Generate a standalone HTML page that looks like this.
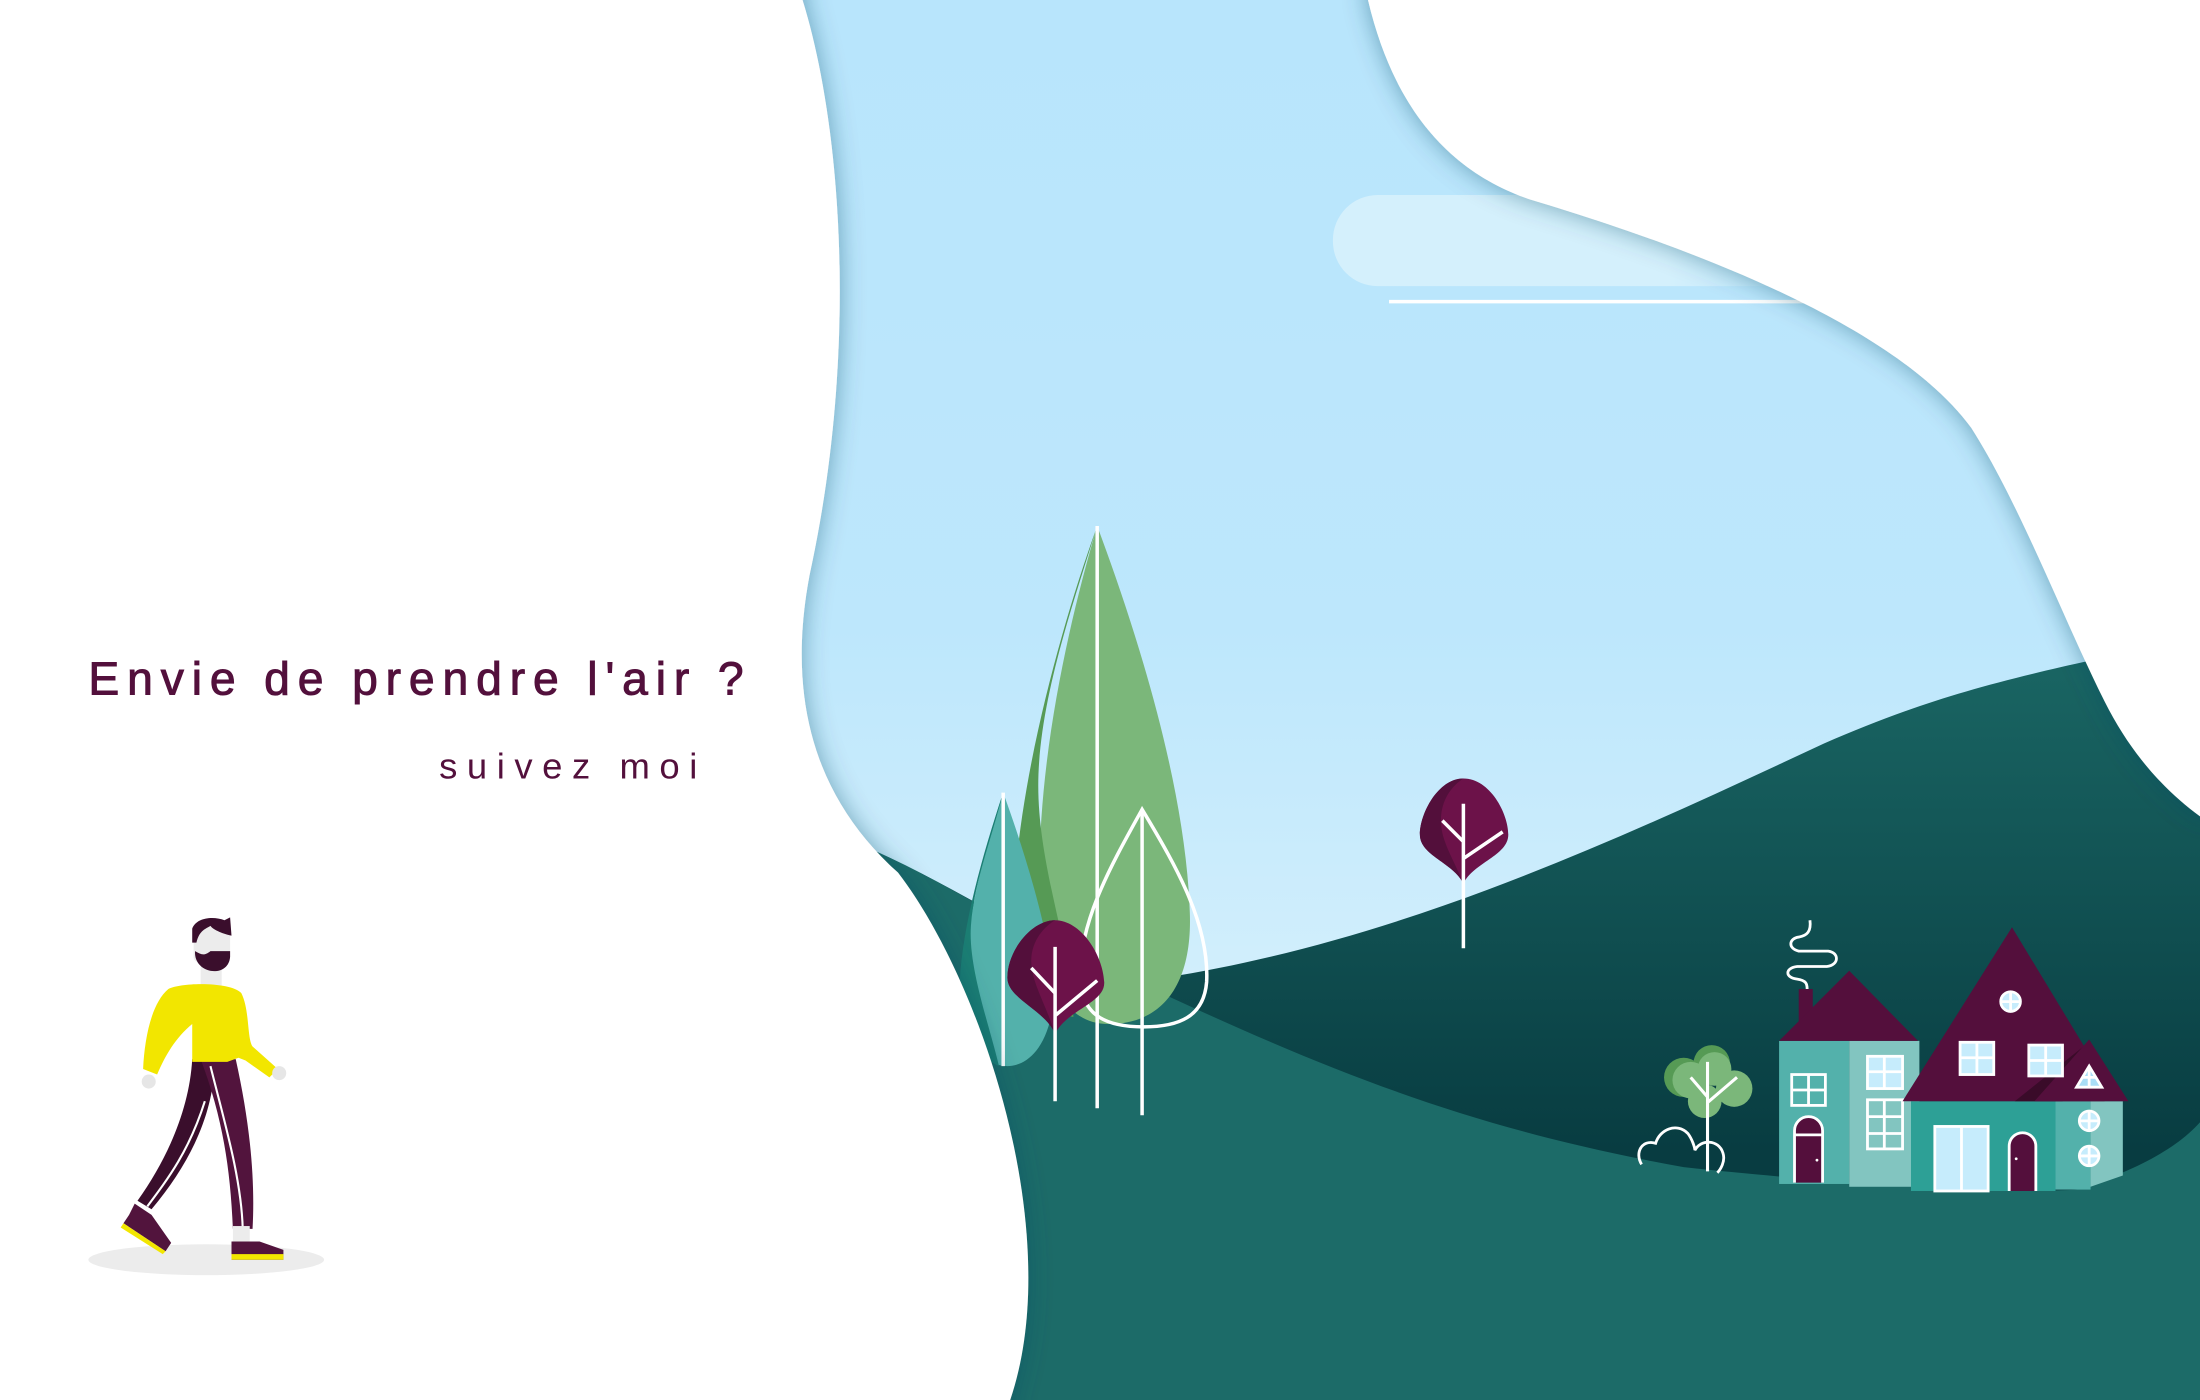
<!DOCTYPE html>
<html><head><meta charset="utf-8"><style>
html,body{margin:0;padding:0;width:2200px;height:1400px;overflow:hidden;background:#fff}
svg{display:block}
</style></head><body>
<svg width="2200" height="1400" viewBox="0 0 1568 998" preserveAspectRatio="none" xmlns="http://www.w3.org/2000/svg">
<defs>
<linearGradient id="sky" x1="0" y1="0" x2="0" y2="1"><stop offset="0" stop-color="#b8e5fc"/><stop offset="0.45" stop-color="#bde7fc"/><stop offset="0.72" stop-color="#d3effc"/></linearGradient>
<linearGradient id="back" gradientUnits="userSpaceOnUse" x1="0" y1="480" x2="0" y2="820"><stop offset="0" stop-color="#196462"/><stop offset="1" stop-color="#083c41"/></linearGradient>
<linearGradient id="cloud" x1="0" y1="0" x2="1" y2="0"><stop offset="0" stop-color="#d4f0fc"/><stop offset="0.7" stop-color="#d4f0fc"/><stop offset="1" stop-color="#d4f0fc" stop-opacity="0"/></linearGradient>
<filter id="sh" x="-20%" y="-20%" width="140%" height="140%"><feDropShadow dx="0" dy="0" stdDeviation="9" flood-color="#1c4a66" flood-opacity="0.45"/></filter>
</defs>
<rect width="1568" height="998" fill="url(#sky)"/>
<rect x="950" y="139" width="340" height="65" rx="32" fill="url(#cloud)"/>
<line x1="990" y1="215" x2="1290" y2="215" stroke="#fff" stroke-width="2.5"/>
<path d="M620,605 C700,640 760,690 830,697 C1000,670 1150,600 1300,530 C1380,495 1440,480 1568,455 L1568,998 L620,998Z" fill="url(#back)"/>
<path d="M620,605 C700,640 760,690 815,702 C950,765 1050,805 1200,832 C1350,848 1450,850 1480,848 C1520,835 1550,820 1568,800 L1568,998 L620,998 Z" fill="#1c6b68"/>
<path d="M782,375 C810,450 845,560 848,650 C850,700 830,730 790,730 C760,730 745,700 742,660 C735,560 760,450 782,375Z" fill="#7bb77a"/>
<path d="M782,375 C755,450 725,560 722,650 C722,690 740,720 765,725 C765,680 740,620 740,560 C740,500 765,430 782,375Z" fill="#569a55"/>
<line x1="782" y1="375" x2="782" y2="790" stroke="#fff" stroke-width="2.5"/>
<path d="M715,565 C735,620 755,690 750,720 C745,750 730,760 718,760 C700,760 690,740 688,700 C688,660 700,610 715,565Z" fill="#53b1ab"/>
<path d="M715,565 C700,610 686,660 684,700 C684,735 700,755 712,760 C705,730 690,690 692,660 C694,630 706,600 715,565Z" fill="#1b7e73"/>
<line x1="715" y1="565" x2="715" y2="760" stroke="#fff" stroke-width="2.5"/>
<path d="M814,577 C840,620 862,660 860,700 C858,725 840,732 815,732 C790,732 772,725 770,700 C768,660 790,620 814,577Z" fill="none" stroke="#fff" stroke-width="2.5"/>
<line x1="814" y1="577" x2="814" y2="795" stroke="#fff" stroke-width="2.5"/>
<path d="M752,656 C770,656 786,680 787,700 C788,715 760,720 752,737 C745,720 718,712 718,697 C718,678 735,656 752,656Z" fill="#6c1249"/>
<path d="M752,656 C735,656 718,678 718,697 C718,712 745,720 752,737 C745,715 735,700 735,685 C735,670 745,660 752,656Z" fill="#530f3b"/>
<path d="M752,675 L752,785 M752,724 L782,699 M752,708 L735,690" stroke="#fff" stroke-width="2.5" fill="none"/>
<path d="M1043,555 C1062,555 1075,580 1075,595 C1075,610 1050,615 1043,630 C1036,615 1012,610 1012,595 C1012,580 1025,555 1043,555Z" fill="#6c1249"/>
<path d="M1043,555 C1025,555 1012,580 1012,595 C1012,610 1036,615 1043,630 C1036,612 1027,600 1027,585 C1027,570 1035,560 1043,555Z" fill="#530f3b"/>
<path d="M1043,573 L1043,676 M1043,612 L1071,593 M1043,600 L1028,585" stroke="#fff" stroke-width="2.5" fill="none"/>
<circle cx="1200" cy="768" r="14" fill="#569a55"/><circle cx="1220" cy="758" r="13" fill="#569a55"/>
<circle cx="1205" cy="770" r="13" fill="#7bb77a"/><circle cx="1222" cy="762" r="12" fill="#7bb77a"/><circle cx="1236" cy="776" r="13" fill="#7bb77a"/><circle cx="1215" cy="785" r="12" fill="#7bb77a"/>
<path d="M1217,757 L1217,835 M1217,786 L1238,768 M1217,782 L1205,768" stroke="#fff" stroke-width="2.2" fill="none"/>
<path d="M1170,830 C1165,822 1170,812 1180,815 C1183,805 1195,800 1203,808 C1206,812 1208,818 1208,820 C1212,812 1225,812 1228,822 C1230,828 1226,834 1224,836" fill="none" stroke="#fff" stroke-width="2"/>
<rect x="1268" y="742" width="50" height="102" fill="#53b1ab"/>
<rect x="1318" y="742" width="50" height="104" fill="#82c5c0"/>
<rect x="1282" y="705" width="10" height="28" fill="#540f3c"/>
<polygon points="1268,742 1318,692 1367,742" fill="#540f3c"/>
<path d="M1290,656 C1291,664 1288,667 1282,668 C1275,669 1274,676 1282,678 L1303,678 C1311,679 1311,688 1302,689 L1281,689 C1272,690 1272,697 1281,698 C1287,699 1288,701 1288,705" fill="none" stroke="#fff" stroke-width="2"/>
<g stroke="#fff" stroke-width="2">
<rect x="1277" y="766" width="24" height="22" fill="none"/><path d="M1289,766V788M1277,777H1301"/>
<rect x="1331" y="753" width="25" height="23" fill="#c6ecfc"/><path d="M1343,753V776M1331,764H1356"/>
<rect x="1331" y="784" width="25" height="35" fill="none"/><path d="M1343,784V819M1331,796H1356M1331,808H1356"/>
<path d="M1279,843 V806 A10,10 0 0 1 1299,806 V843" fill="#540f3c"/><path d="M1279,809H1299"/>
</g>
<circle cx="1295" cy="827" r="1" fill="#fff"/>
<rect x="1362" y="785" width="103" height="64" fill="#2da096"/>
<rect x="1465" y="785" width="25" height="63" fill="#53b1ab"/>
<path d="M1490,785 H1513 V838 L1490,846Z" fill="#82c5c0"/>
<polygon points="1356,785 1434,661 1500,770 1500,785" fill="#540f3c"/>
<polygon points="1436,785 1490,742 1470,785" fill="#3a0b29"/>
<polygon points="1450,785 1489,741 1517,785" fill="#540f3c"/>
<g stroke="#fff" stroke-width="2">
<circle cx="1433" cy="714" r="7" fill="#c6ecfc"/><path d="M1433,707V721M1426,714H1440"/>
<rect x="1397" y="743" width="24" height="23" fill="#c6ecfc"/><path d="M1409,743V766M1397,754H1421"/>
<rect x="1446" y="745" width="24" height="22" fill="#c6ecfc"/><path d="M1458,745V767M1446,756H1470"/>
<polygon points="1489,760 1480,775 1498,775" fill="#a9def7"/><path d="M1489,760V775M1484,768H1494"/>
<circle cx="1489" cy="799" r="7" fill="#c6ecfc"/><path d="M1489,792V806M1482,799H1496"/>
<circle cx="1489" cy="824" r="7" fill="#c6ecfc"/><path d="M1489,817V831M1482,824H1496"/>
<rect x="1379" y="803" width="38" height="46" fill="#c6ecfc"/><path d="M1398,803V849"/>
<path d="M1432,849 V817 A9.5,9.5 0 0 1 1451,817 V849" fill="#540f3c"/>
</g>
<circle cx="1437" cy="826" r="1" fill="#fff"/>
<g filter="url(#sh)" fill="#fff">
<path d="M-20,-20 L572,-20 L572,0 C600,90 612,250 577,410 C560,500 582,570 640,622 C700,700 760,880 720,998 L720,1020 L-20,1020 Z"/>
<path d="M975,-20 L975,0 C995,85 1040,125 1090,142 C1200,175 1350,230 1405,305 C1440,360 1470,440 1500,500 C1520,540 1545,565 1568,582 L1590,582 L1590,-20 Z"/>
</g>
<text x="63" y="495" font-family="Liberation Sans, sans-serif" font-size="33" fill="#53103c" stroke="#53103c" stroke-width="0.7" textLength="467" lengthAdjust="spacing">Envie de prendre l'air ?</text>
<text x="313" y="555" font-family="Liberation Sans, sans-serif" font-size="26" fill="#53103c" textLength="184" lengthAdjust="spacing">suivez moi</text>
<ellipse cx="147" cy="898" rx="84" ry="11" fill="#ececec"/>
<path d="M137,755 L153,758 C152,795 135,830 108,862 L98,856 C120,825 135,790 137,755Z" fill="#3a0e2c"/>
<path d="M143,755 L168,755 C178,800 182,840 180,876 L166,876 C164,830 158,795 143,755Z" fill="#52143d"/>
<path d="M150,760 C160,800 172,840 173,876" stroke="#fff" stroke-width="1.5" fill="none"/>
<path d="M146,785 C135,820 120,840 105,860" stroke="#fff" stroke-width="1.5" fill="none"/>
<rect x="166" y="874" width="12" height="12" fill="#ececec"/>
<path d="M165,885 L185,885 L202,891 L202,898 L165,898Z" fill="#52143d"/><rect x="165" y="894" width="37" height="4" fill="#f2e600"/>
<path d="M96,858 L108,866 L122,886 L118,892 L88,872 L92,866Z" fill="#52143d"/><path d="M88,872 L118,892 L116,894 L86,875Z" fill="#f2e600"/>
<rect x="143" y="688" width="15" height="15" fill="#ececec"/>
<path d="M120,705 C130,700 165,700 172,708 C178,720 176,740 180,746 L198,762 L192,768 L175,756 L170,754 L162,757 L137,757 L137,730 C125,740 118,752 112,766 L102,762 C103,740 108,715 120,705Z" fill="#f2e600"/>
<circle cx="106" cy="771" r="5" fill="#e6e6e6"/><circle cx="199" cy="765" r="5" fill="#e6e6e6"/>
<rect x="138" y="660" width="26" height="26" rx="4" fill="#ececec"/>
<path d="M139,680 C140,695 163,697 164,682 L164,678 L150,678 C145,682 143,680 139,678Z" fill="#3a0e2c"/>
<path d="M137,672 L137,662 C140,654 152,653 160,656 L164,654 L165,667 C160,666 152,663 150,660 C147,662 142,663 140,672Z" fill="#3a0e2c"/>
</svg>
</body></html>
